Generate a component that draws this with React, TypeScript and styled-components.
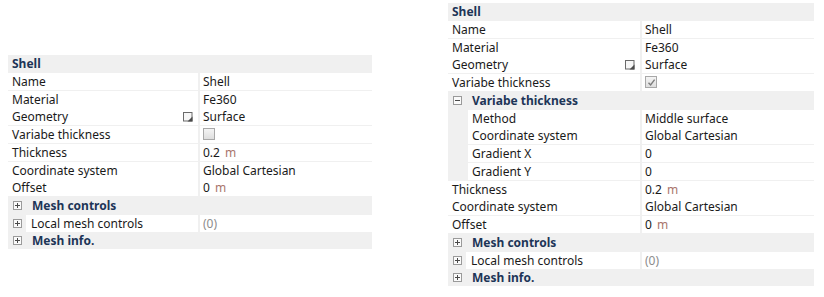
import React from 'react';
import styled, { createGlobalStyle } from 'styled-components';

const GlobalStyle = createGlobalStyle`
  html, body {
    margin: 0;
    padding: 0;
    background: #ffffff;
  }
  body {
    font-family: "Noto Sans", "Open Sans", sans-serif;
    font-size: 12px;
    color: #1a1a1a;
  }
`;

const Page = styled.div`
  display: flex;
  align-items: flex-start;
  gap: 76px;
  padding: 3px 0 0 8px;
  width: 824px;
  height: 297px;
  box-sizing: border-box;
`;

const Panel = styled.div<{ $width: number; $top: number }>`
  width: ${(p) => p.$width}px;
  margin-top: ${(p) => p.$top}px;
  background: #f0f0f0;
  display: flex;
  flex-direction: column;
  gap: 1px;
`;

const Row = styled.div<{ $label: number }>`
  display: grid;
  grid-template-columns: ${(p) => p.$label}px 1fr;
  column-gap: 2px;
  height: 16.75px;
`;

const GroupRow = styled.div<{ $indent: number }>`
  display: flex;
  align-items: center;
  height: 16.75px;
  padding-left: ${(p) => p.$indent}px;
  font-weight: 700;
  color: #1d3557;
`;

const Label = styled.div<{ $indent: number; $pad?: number }>`
  display: flex;
  align-items: center;
  flex: 1;
  margin-left: ${(p) => p.$indent}px;
  background: #ffffff;
  padding-left: ${(p) => p.$pad ?? 4}px;
  padding-right: 5px;
  white-space: nowrap;
  overflow: hidden;
`;

const LabelText = styled.span`
  flex: 1;
`;

const Value = styled.div`
  display: flex;
  align-items: center;
  background: #ffffff;
  padding-left: 3px;
  white-space: nowrap;
`;

const Unit = styled.span`
  margin-left: 5px;
  color: #a9756b;
`;

const Muted = styled.span`
  color: #8c8c8c;
`;

const Expander = styled.span<{ $gap: number }>`
  position: relative;
  width: 9px;
  height: 9px;
  box-sizing: border-box;
  border: 1px solid #9a9a9a;
  background: #fafafa;
  margin-right: ${(p) => p.$gap}px;
  flex: none;

  &::before {
    content: '';
    position: absolute;
    left: 1px;
    top: 3px;
    width: 5px;
    height: 1px;
    background: #4a4a4a;
  }
`;

const Plus = styled(Expander)`
  &::after {
    content: '';
    position: absolute;
    left: 3px;
    top: 1px;
    width: 1px;
    height: 5px;
    background: #4a4a4a;
  }
`;

const ExpanderCell = styled.div`
  display: flex;
  align-items: stretch;
  padding-left: 5px;

  & > span {
    align-self: center;
  }
`;

const Check = styled.span`
  display: inline-flex;
  align-items: center;
  justify-content: center;
  width: 12px;
  height: 12px;
  box-sizing: border-box;
  border: 1px solid #a8a8a8;
  background: linear-gradient(#f4f4f4, #dedede);
`;

const LinkIcon = () => (
  <svg width="10" height="10" viewBox="0 0 10 10">
    <rect x="0.5" y="0.5" width="8.5" height="8.5" fill="#f6f6f6" stroke="#6a6a6a" />
    <path d="M4.5 9.5 L9.5 4.5 L9.5 9.5 Z" fill="#4a4a4a" />
  </svg>
);

const CheckMark = () => (
  <svg width="9" height="9" viewBox="0 0 9 9">
    <path d="M1.5 4.8 L3.6 7 L7.6 1.6" fill="none" stroke="#7d7d7d" strokeWidth="1.4" />
  </svg>
);

type Item =
  | { kind: 'header'; text: string }
  | { kind: 'group'; text: string; open?: boolean }
  | {
      kind: 'prop';
      label: string;
      value?: React.ReactNode;
      unit?: string;
      indent?: number;
      icon?: boolean;
      expand?: boolean;
      muted?: boolean;
    };

const before: Item[] = [
  { kind: 'header', text: 'Shell' },
  { kind: 'prop', label: 'Name', value: 'Shell' },
  { kind: 'prop', label: 'Material', value: 'Fe360' },
  { kind: 'prop', label: 'Geometry', value: 'Surface', icon: true },
];

const after: Item[] = [
  { kind: 'prop', label: 'Thickness', value: '0.2', unit: 'm' },
  { kind: 'prop', label: 'Coordinate system', value: 'Global Cartesian' },
  { kind: 'prop', label: 'Offset', value: '0', unit: 'm' },
  { kind: 'group', text: 'Mesh controls' },
  { kind: 'prop', label: 'Local mesh controls', value: '(0)', expand: true, muted: true },
  { kind: 'group', text: 'Mesh info.' },
];

const leftItems: Item[] = [
  ...before,
  { kind: 'prop', label: 'Variabe thickness', value: <Check /> },
  ...after,
];

const rightItems: Item[] = [
  ...before,
  {
    kind: 'prop',
    label: 'Variabe thickness',
    value: (
      <Check>
        <CheckMark />
      </Check>
    ),
  },
  { kind: 'group', text: 'Variabe thickness', open: true },
  { kind: 'prop', label: 'Method', value: 'Middle surface', indent: 20 },
  { kind: 'prop', label: 'Coordinate system', value: 'Global Cartesian', indent: 20 },
  { kind: 'prop', label: 'Gradient X', value: '0', indent: 20 },
  { kind: 'prop', label: 'Gradient Y', value: '0', indent: 20 },
  ...after,
];

const PropertyGrid: React.FC<{ items: Item[]; width: number; label: number; top: number }> = ({
  items,
  width,
  label,
  top,
}) => (
  <Panel $width={width} $top={top}>
    {items.map((it, i) => {
      if (it.kind === 'header') {
        return (
          <GroupRow key={i} $indent={4}>
            {it.text}
          </GroupRow>
        );
      }
      if (it.kind === 'group') {
        return (
          <GroupRow key={i} $indent={5}>
            {it.open ? <Expander $gap={10} /> : <Plus $gap={10} />}
            {it.text}
          </GroupRow>
        );
      }
      if (it.expand) {
        return (
          <Row key={i} $label={label}>
            <ExpanderCell>
              <Plus $gap={4} />
              <Label $indent={0} $pad={5}>
                <LabelText>{it.label}</LabelText>
              </Label>
            </ExpanderCell>
            <Value>{it.muted ? <Muted>{it.value}</Muted> : it.value}</Value>
          </Row>
        );
      }
      return (
        <Row key={i} $label={label}>
          <Label $indent={it.indent ?? 0}>
            <LabelText>{it.label}</LabelText>
            {it.icon && <LinkIcon />}
          </Label>
          <Value>
            {it.value}
            {it.unit && <Unit>{it.unit}</Unit>}
          </Value>
        </Row>
      );
    })}
  </Panel>
);

export default function App() {
  return (
    <>
      <GlobalStyle />
      <Page>
        <PropertyGrid items={leftItems} width={364} label={190} top={52} />
        <PropertyGrid items={rightItems} width={366} label={192} top={0} />
      </Page>
    </>
  );
}
